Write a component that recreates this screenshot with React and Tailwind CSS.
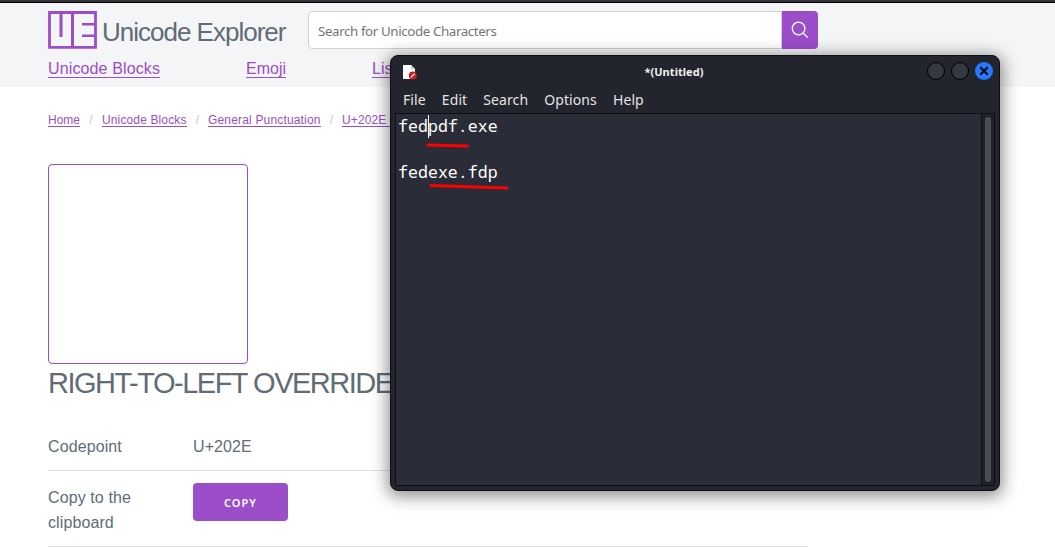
const link = "border-b border-[#9b4dca]";

function Logo() {
  return (
    <svg width="49" height="38" viewBox="0 0 49 38" fill="none" stroke="#9b4dca" className="shrink-0">
      <path d="M1.5 1.5H47.5V36.3H1.5Z" strokeWidth="2.8" />
      <path d="M24.5 1V37M13 1V26" strokeWidth="3" />
      <path d="M34 13.3H47M34 24.7H47" strokeWidth="2.6" />
    </svg>
  );
}

function Header() {
  return (
    <header className="h-[84px] bg-[#f4f5f6] pl-12 pt-2">
      <div className="flex h-[38px] w-[770px]">
        <Logo />
        <div className="w-[206px] shrink-0 whitespace-nowrap pl-[5px] pt-[1px] text-[26px] leading-10 tracking-[-1px]">Unicode Explorer</div>
        <div className="ml-[5px] flex flex-1">
          <div className="flex flex-1 items-center rounded-l border border-[#d1d1d1] bg-white pl-[9px] pt-[3px] font-['Noto_Sans'] text-[13.33px] tracking-[-0.39px] text-[#757575]">
            Search for Unicode Characters
          </div>
          <div className="flex w-9 items-center justify-center rounded-r bg-[#9b4dca]">
            <svg width="18" height="18" viewBox="0 0 18 18" fill="none" stroke="white" strokeWidth="1.3">
              <circle cx="7.6" cy="7.5" r="6.3" />
              <path d="M12 12l4.7 4.5" />
            </svg>
          </div>
        </div>
      </div>
      <nav className="mt-[11px] flex whitespace-nowrap text-[16px] leading-[17px] text-[#9b4dca]">
        <span className="w-[198px] tracking-[0.13px]"><span className={link}>Unicode Blocks</span></span>
        <span className="w-[126px]"><span className={link}>Emoji</span></span>
        <span className={link}>Lists</span>
      </nav>
    </header>
  );
}

function Crumbs() {
  return (
    <div className="flex h-[14px] whitespace-nowrap text-[12px] leading-[14px] text-[#9b4dca]">
      <span className="h-[14px] w-8 border-b border-[#9b4dca]">Home</span>
      <span className="w-[22px] text-center text-[#c8c8c8]">/</span>
      <span className="h-[14px] w-[85px] border-b border-[#9b4dca] tracking-[0.13px]">Unicode Blocks</span>
      <span className="w-[21px] text-center text-[#c8c8c8]">/</span>
      <span className="h-[14px] w-[113px] border-b border-[#9b4dca] tracking-[0.17px]">General Punctuation</span>
      <span className="w-[21px] text-center text-[#c8c8c8]">/</span>
      <span className="h-[14px] w-[48px] overflow-hidden border-b border-[#9b4dca] tracking-[0.13px]">U+202E</span>
    </div>
  );
}

function Editor() {
  return (
    <section className="absolute left-[390px] top-[55px] flex h-[436px] w-[610px] flex-col rounded-lg border border-[#0d0f15] bg-[#23252e] px-[4px] pb-[4px] font-['Noto_Sans'] text-[#f0f0f0] shadow-[0_3px_16px_3px_rgba(0,0,0,0.42)]">
      <div className="grid h-[30px] grid-cols-3 items-center">
        <svg className="ml-[7px] mt-px" width="15" height="16" viewBox="0 0 15 16">
          <path d="M1 1H9L13 5V15H1Z" fill="#fff" />
          <path d="M9 1L13 5H9Z" fill="#ccc" />
          <circle cx="10.8" cy="11.5" r="4" fill="#cf1b20" />
          <path d="M8.8 13.4L12.6 9.7" stroke="#fff" strokeWidth="1.3" />
        </svg>
        <div className="pr-[42px] text-center text-[11px] font-bold leading-none tracking-[0.05px]">*(Untitled)</div>
        <div className="flex justify-end gap-[6px] pr-[2px]">
          <i className="size-[18px] rounded-full border border-black bg-[#343843]" />
          <i className="size-[18px] rounded-full border border-black bg-[#343843]" />
          <svg width="18" height="18" viewBox="0 0 18 18">
            <circle cx="9" cy="9" r="9" fill="#2777ff" />
            <path d="M5.3 5.3L12.7 12.7M12.7 5.3L5.3 12.7" stroke="#080b14" strokeWidth="2.2" />
          </svg>
        </div>
      </div>
      <div className="flex h-[27px] items-center gap-4 pl-2 text-[14px] tracking-[0.1px] text-[#e3e3e3]">
        <span>File</span><span>Edit</span><span>Search</span><span>Options</span><span>Help</span>
      </div>
      <div className="flex flex-1 border border-[#0d0f15] bg-[#2a2c37]">
        <div className="flex-1 pl-[2px] font-['Noto_Sans_Mono','DejaVu_Sans_Mono',monospace] text-[16.5px] leading-[23px] tracking-[0.07px] text-white">
          <div className="relative w-fit">
            fedpdf.exe
            <i className="absolute left-[30px] top-px h-[23px] w-px bg-white" />
            <svg className="absolute left-[27px] top-[27px]" width="46" height="8"><path d="M3 4L42.5 5" stroke="#f00" strokeWidth="3" strokeLinecap="round" /></svg>
          </div>
          <div className="h-[23px]" />
          <div className="relative w-fit">
            fedexe.fdp
            <svg className="absolute left-[29px] top-[22px]" width="86" height="9"><path d="M4 3.5L80 6" stroke="#f00" strokeWidth="3" strokeLinecap="round" /></svg>
          </div>
        </div>
        <div className="w-[13px] border-l border-[#0d0f15] bg-[#1e2227] pb-[3px] pl-[3px] pt-[3px]">
          <div className="h-full w-[6px] rounded-full bg-[#4b4d55]" />
        </div>
      </div>
    </section>
  );
}

export default function App() {
  return (
    <div className="relative h-[547px] w-[1055px] overflow-hidden bg-white font-['Liberation_Sans',sans-serif] text-[#606c76]">
      <div className="h-[3px] border-b border-black bg-[#35343d]" />
      <Header />
      <main className="pl-12 pt-[26px]">
        <Crumbs />
        <div className="mt-[37px] size-[200px] rounded border border-[#9b4dca]" />
        <h1 className="whitespace-nowrap text-[29px] leading-[38px] tracking-[-1.5px]">RIGHT-TO-LEFT OVERRIDE</h1>
        <div className="mt-5 w-[760px] text-[16px] leading-[25px]">
          <div className="flex h-[49px] border-b border-[#e1e1e1] pt-3">
            <div className="w-[145px] tracking-[0.1px]">Codepoint</div>
            <div className="tracking-[0.1px]">U+202E</div>
          </div>
          <div className="flex h-[76px] border-b border-[#e1e1e1] pt-3">
            <div className="w-[145px] pr-10 pt-[2px] tracking-[0.1px]">Copy to the clipboard</div>
            <button className="h-[38px] w-[95px] rounded bg-[#9b4dca] pt-px font-['Noto_Sans'] text-[11px] font-semibold tracking-[1px] text-white">COPY</button>
          </div>
        </div>
      </main>
      <Editor />
    </div>
  );
}
